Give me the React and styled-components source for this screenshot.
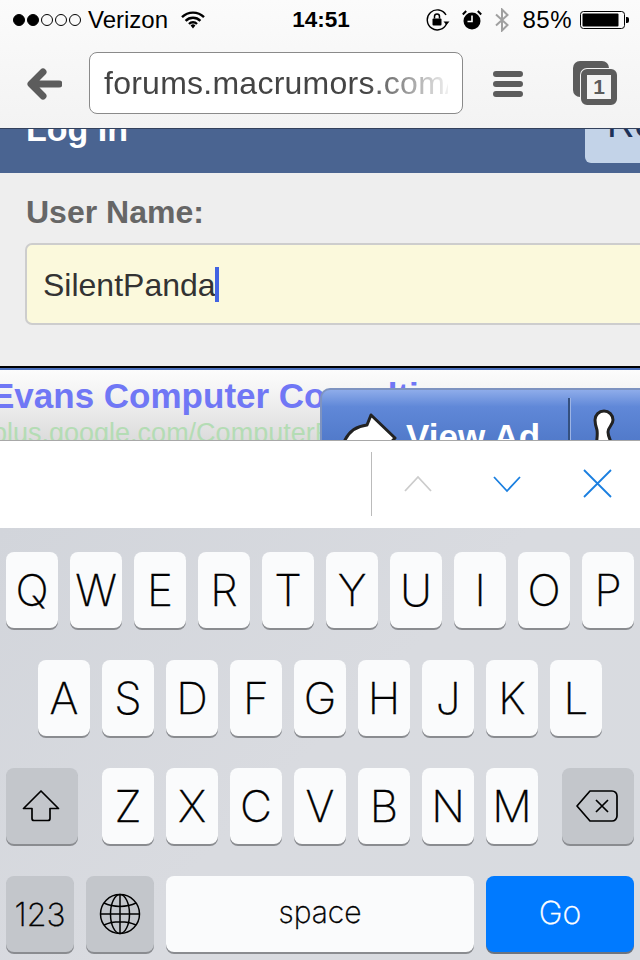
import React from 'react';
import styled, { createGlobalStyle } from 'styled-components';

const GlobalStyle = createGlobalStyle`
  html, body {
    margin: 0;
    padding: 0;
    background: #fff;
  }
`;

const Phone = styled.div`
  width: 640px;
  height: 960px;
  overflow: hidden;
  display: flex;
  flex-direction: column;
  font-family: "Liberation Sans", Arial, sans-serif;
`;

// Top chrome
const Chrome = styled.header`
  height: 128px;
  flex: none;
  background: linear-gradient(#fbfbfb, #f3f3f3);
  border-bottom: 1px solid #33415c;
  margin-bottom: -1px;
  position: relative;
  z-index: 1;
`;

const StatusBar = styled.div`
  height: 40px;
  display: grid;
  grid-template-columns: 1fr auto 1fr;
  align-items: center;
  padding: 0 11px 0 13px;
  color: #000;
  font-size: 24px;
`;

const StatusLeft = styled.div`
  display: flex;
  align-items: center;
`;

const StatusRight = styled.div`
  display: flex;
  align-items: center;
  justify-content: flex-end;
`;

const Dots = styled.div`
  display: flex;
  gap: 2px;
  margin-right: 7px;
`;

const Dot = styled.span`
  width: 12px;
  height: 12px;
  box-sizing: border-box;
  border-radius: 50%;
  border: 1px solid #000;
  background: ${(p) => (p.$on ? '#000' : 'transparent')};
`;

const Time = styled.div`
  font-weight: 700;
  font-size: 22.5px;
`;

const Percent = styled.span`
  margin: 0 8px 0 12px;
  letter-spacing: 0.5px;
`;

const NavBar = styled.div`
  height: 88px;
  display: flex;
  align-items: flex-start;
  padding-left: 26px;
`;

const BackIcon = styled.svg`
  width: 36px;
  height: 36px;
  margin: 26px 27px 0 0;
  flex: none;
`;

const UrlField = styled.div`
  width: 374px;
  height: 62px;
  margin-top: 12px;
  flex: none;
  box-sizing: border-box;
  background: #fff;
  border: 1px solid #8a8a8a;
  border-radius: 8px;
  padding: 0 14px;
  display: flex;
  align-items: center;
  overflow: hidden;
`;

const UrlText = styled.div`
  font-size: 32px;
  letter-spacing: 0.25px;
  color: #444;
  white-space: nowrap;
  width: 100%;
  overflow: hidden;
  -webkit-mask-image: linear-gradient(to right, #000 76%, rgba(0, 0, 0, 0.08) 100%);
  mask-image: linear-gradient(to right, #000 76%, rgba(0, 0, 0, 0.08) 100%);
`;

const MenuIcon = styled.svg`
  width: 30px;
  height: 26px;
  margin: 31px 0 0 30px;
  flex: none;
`;

const TabsIcon = styled.div`
  position: relative;
  width: 44px;
  height: 44px;
  margin: 21px 0 0 50px;
  flex: none;
`;

const TabsBack = styled.div`
  position: absolute;
  left: 0;
  top: 0;
  width: 36px;
  height: 36px;
  background: #5c5c5c;
  border-radius: 7px;
`;

const TabsFront = styled.div`
  position: absolute;
  left: 8px;
  top: 8px;
  width: 36px;
  height: 36px;
  box-sizing: border-box;
  background: #f4f4f4;
  border: 6px solid #5c5c5c;
  border-radius: 6px;
  box-shadow: 0 0 0 1px #f4f4f4;
  color: #5c5c5c;
  font-size: 21px;
  font-weight: 700;
  display: flex;
  align-items: center;
  justify-content: center;
`;

// Web page
const BlueHead = styled.section`
  height: 45px;
  flex: none;
  background: #4a6491;
  display: flex;
  justify-content: space-between;
  align-items: flex-start;
  overflow: hidden;
`;

const LogIn = styled.h1`
  margin: -19px 0 0 26px;
  font-size: 34px;
  line-height: 40px;
  font-weight: 700;
  color: #fff;
`;

const RegisterTab = styled.div`
  width: 55px;
  height: 35px;
  box-sizing: border-box;
  background: #c3d3e8;
  border-radius: 0 0 0 6px;
  color: #1c3158;
  font-size: 38px;
  line-height: 40px;
  white-space: nowrap;
  overflow: hidden;
`;

const RegisterLabel = styled.span`
  display: block;
  margin: -24px 0 0 22px;
`;

const FormArea = styled.section`
  height: 193px;
  flex: none;
  box-sizing: border-box;
  background: #eeeeee;
  padding: 21px 0 0 26px;
  overflow: hidden;
`;

const FieldLabel = styled.label`
  display: block;
  color: #666;
  font-size: 32px;
  line-height: 36px;
  font-weight: 700;
`;

const TextInput = styled.div`
  width: 640px;
  height: 82px;
  margin: 13px 0 0 -1px;
  box-sizing: border-box;
  background: #fbf9dc;
  border: 2px solid #cdcdcd;
  border-radius: 7px;
  padding: 3px 0 0 16px;
  display: flex;
  align-items: center;
  color: #333;
  font-size: 32px;
`;

const Caret = styled.span`
  width: 4px;
  height: 35px;
  margin: -3px 0 0 -1px;
  background: #4264e2;
`;

const AdBanner = styled.section`
  height: 74px;
  flex: none;
  position: relative;
  overflow: hidden;
  box-sizing: border-box;
  border-top: 2px solid #000;
  background: linear-gradient(#fdfdfd, #f5f5f5 30%, #dcdcdc);
  &::before {
    content: '';
    display: block;
    height: 2px;
    background: #4a6fbc;
  }
`;

const AdTitle = styled.div`
  margin: 6px 0 0 -9px;
  color: #7077f5;
  font-size: 35px;
  line-height: 40px;
  font-weight: 700;
  white-space: nowrap;
`;

const AdLink = styled.div`
  margin: 2px 0 0 -8px;
  color: #b4dcb4;
  font-size: 27px;
  line-height: 30px;
  white-space: nowrap;
`;

const ViewAd = styled.div`
  position: absolute;
  left: 320px;
  top: 20px;
  width: 330px;
  height: 60px;
  box-sizing: border-box;
  border: 2px solid #7e93c0;
  border-right: 0;
  border-radius: 10px 0 0 0;
  background: linear-gradient(#8eacea, #6088d8 30%, #4f78c8);
  display: flex;
  align-items: flex-start;
  color: #fff;
  font-size: 35px;
  font-weight: 700;
  overflow: hidden;
`;

const ViewAdIcon = styled.svg`
  width: 56px;
  height: 50px;
  margin: 20px 8px 0 20px;
  flex: none;
`;

const ViewAdLabel = styled.span`
  margin-top: 29px;
  width: 162px;
  flex: none;
  white-space: nowrap;
  line-height: 36px;
`;

const ViewAdRule = styled.span`
  width: 2px;
  height: 50px;
  margin-top: 8px;
  background: #34507f;
  border-right: 1px solid #9db4e4;
  flex: none;
`;

const ViewAdGlyph = styled.svg`
  width: 24px;
  height: 40px;
  margin: 19px 0 0 21px;
  flex: none;
`;

// Find bar
const FindBar = styled.section`
  height: 88px;
  flex: none;
  box-sizing: border-box;
  background: #fff;
  border-top: 1px solid #a8a8a8;
  display: flex;
  align-items: center;
`;

const FindRule = styled.span`
  width: 1px;
  height: 64px;
  margin: -1px 0 0 371px;
  background: #bbb;
`;

const FindIcon = styled.svg`
  width: 30px;
  height: 30px;
  flex: none;
  margin-left: ${(p) => p.$gap}px;
  margin-top: -2px;
`;

// Keyboard
const Keyboard = styled.section`
  flex: 1;
  box-sizing: border-box;
  padding: 24px 6px 0;
  background: linear-gradient(135deg, #d2d5db, #d9dbe0 50%, #d8dbe0);
  display: flex;
  flex-direction: column;
  gap: 32px;
`;

const KeyRow = styled.div`
  display: flex;
  justify-content: ${(p) => p.$justify || 'center'};
  gap: 12px;
`;

const KeyGroup = styled.div`
  display: flex;
  gap: 12px;
`;

const Key = styled.div`
  width: ${(p) => p.$w || 52}px;
  height: 76px;
  flex: none;
  box-sizing: border-box;
  padding-bottom: ${(p) => p.$lift || 0}px;
  border-radius: 8px;
  background: ${(p) => (p.$tone === 'dark' ? '#c3c6cb' : p.$tone === 'go' ? '#007aff' : '#fafbfc')};
  box-shadow: 0 2px 0 ${(p) => (p.$tone === 'go' ? '#6b7480' : '#8a8c90')};
  color: ${(p) => (p.$tone === 'go' ? '#fff' : '#000')};
  font-family: Inter, "Liberation Sans", sans-serif;
  font-weight: 200;
  -webkit-text-stroke: 0.35px currentColor;
  font-size: ${(p) => p.$size || 44}px;
  display: flex;
  align-items: center;
  justify-content: center;
`;

const KeyIcon = styled.svg`
  flex: none;
  margin-right: 2px;
`;

const rows = ['QWERTYUIOP', 'ASDFGHJKL', 'ZXCVBNM'];

const StatusIcon = styled.svg`
  flex: none;
  margin-left: ${(p) => p.$gap || 0}px;
`;

export default function App() {
  return (
    <Phone>
      <GlobalStyle />
      <Chrome>
        <StatusBar>
          <StatusLeft>
            <Dots>
              {[1, 1, 0, 0, 0].map((on, i) => (
                <Dot key={i} $on={!!on} />
              ))}
            </Dots>
            Verizon
            <StatusIcon $gap={13} width="24" height="18" viewBox="0 0 24 18">
              <path d="M1 6.2a15.5 15.5 0 0 1 22 0M4.6 9.8a10.4 10.4 0 0 1 14.8 0M8 13a5.6 5.6 0 0 1 8 0" fill="none" stroke="#000" strokeWidth="2.4" />
              <path d="M9.6 14.4a3.5 3.5 0 0 1 4.8 0L12 17.4z" fill="#000" />
            </StatusIcon>
          </StatusLeft>
          <Time>14:51</Time>
          <StatusRight>
            <StatusIcon width="24" height="22" viewBox="0 0 24 22">
              <path d="M20.6 14.5A10 10 0 1 1 20 6" fill="none" stroke="#000" strokeWidth="1.4" />
              <path d="M17.5 12.5h6l-3 3.5z" fill="#000" />
              <rect x="6.5" y="9.5" width="9" height="7" rx="1" fill="#000" />
              <path d="M8.5 9.5V7.5a2.5 2.5 0 0 1 5 0v2" fill="none" stroke="#000" strokeWidth="1.5" />
            </StatusIcon>
            <StatusIcon $gap={12} width="20" height="20" viewBox="0 0 20 20">
              <circle cx="10" cy="11" r="8.5" fill="#000" />
              <path d="M10 5.5V11.5H5.5" fill="none" stroke="#fff" strokeWidth="1.6" />
              <path d="M.8 4.500 4.200 1M19.200 4.500 15.800 1" stroke="#000" strokeWidth="2" />
            </StatusIcon>
            <StatusIcon $gap={12} width="16" height="24" viewBox="0 0 16 24">
              <path d="M2 6.500 13.500 17 8 22.500V1.500L13.500 7 2 17.500" fill="none" stroke="#a0a0a0" strokeWidth="2" />
            </StatusIcon>
            <Percent>85%</Percent>
            <StatusIcon width="49" height="20" viewBox="0 0 49 20">
              <rect x="0.5" y="1.500" width="44" height="17" rx="3" fill="none" stroke="#000" />
              <rect x="2.500" y="3.500" width="36" height="13" rx="1" fill="#000" />
              <path d="M46 7h1a2 2 0 0 1 2 2v2a2 2 0 0 1-2 2h-1z" fill="#000" />
            </StatusIcon>
          </StatusRight>
        </StatusBar>
        <NavBar>
          <BackIcon viewBox="0 0 36 36">
            <path d="M33 18H6M17 6 5 18l12 12" fill="none" stroke="#5c5c5c" strokeWidth="7" strokeLinecap="round" strokeLinejoin="round" />
          </BackIcon>
          <UrlField>
            <UrlText>forums.macrumors.com/</UrlText>
          </UrlField>
          <MenuIcon viewBox="0 0 30 26">
            <path d="M3 3h24M3 13h24M3 23h24" stroke="#5c5c5c" strokeWidth="6" strokeLinecap="round" />
          </MenuIcon>
          <TabsIcon>
            <TabsBack />
            <TabsFront>1</TabsFront>
          </TabsIcon>
        </NavBar>
      </Chrome>

      <BlueHead>
        <LogIn>Log In</LogIn>
        <RegisterTab>
          <RegisterLabel>Register</RegisterLabel>
        </RegisterTab>
      </BlueHead>

      <FormArea>
        <FieldLabel>User Name:</FieldLabel>
        <TextInput>
          SilentPanda
          <Caret />
        </TextInput>
      </FormArea>

      <AdBanner>
        <AdTitle>Evans Computer Consulting</AdTitle>
        <AdLink>plus.google.com/ComputerRepair</AdLink>
        <ViewAd>
          <ViewAdIcon viewBox="0 0 56 50">
            <path d="M3 30c5-10 13-14 22-15l4-10 24 23-20 22H3z" fill="#fff" stroke="#222" strokeWidth="3" strokeLinejoin="round" />
          </ViewAdIcon>
          <ViewAdLabel>View Ad</ViewAdLabel>
          <ViewAdRule />
          <ViewAdGlyph viewBox="0 0 24 40">
            <path d="M12 2a9 9 0 0 1 9 9c0 5-5 7-5 12 0 5 3 9 5 15H5c-1-7 1-11 0-17-1-3-2-6-2-10a9 9 0 0 1 9-9z" fill="#fff" stroke="#222" strokeWidth="3" />
          </ViewAdGlyph>
        </ViewAd>
      </AdBanner>

      <FindBar>
        <FindRule />
        <FindIcon $gap={31} viewBox="0 0 30 30">
          <path d="M2 22 15 8l13 14" fill="none" stroke="#ccc" strokeWidth="1.8" />
        </FindIcon>
        <FindIcon $gap={59} viewBox="0 0 30 30">
          <path d="M2 8l13 14L28 8" fill="none" stroke="#1a7fe0" strokeWidth="1.8" />
        </FindIcon>
        <FindIcon $gap={60} viewBox="0 0 30 30">
          <path d="M2 1l27 27M29 1 2 28" fill="none" stroke="#1a7fe0" strokeWidth="1.8" />
        </FindIcon>
      </FindBar>

      <Keyboard>
        <KeyRow>
          {rows[0].split('').map((c) => (
            <Key key={c}>{c}</Key>
          ))}
        </KeyRow>
        <KeyRow>
          {rows[1].split('').map((c) => (
            <Key key={c}>{c}</Key>
          ))}
        </KeyRow>
        <KeyRow $justify="space-between">
          <Key $w={72} $tone="dark">
            <KeyIcon width="38" height="32" viewBox="0 0 38 32">
              <path d="M19 1 1.500 18.500H10v10a2 2 0 0 0 2 2h14a2 2 0 0 0 2-2v-10h8.500z" fill="none" stroke="#000" strokeWidth="1.7" strokeLinejoin="round" />
            </KeyIcon>
          </Key>
          <KeyGroup>
            {rows[2].split('').map((c) => (
              <Key key={c}>{c}</Key>
            ))}
          </KeyGroup>
          <Key $w={72} $tone="dark">
            <KeyIcon width="42" height="32" viewBox="0 0 42 32">
              <path d="M14 1h22a5 5 0 0 1 5 5v20a5 5 0 0 1-5 5H14L1 16z" fill="none" stroke="#000" strokeWidth="1.7" strokeLinejoin="round" />
              <path d="M20 10l12 12M32 10 20 22" stroke="#000" strokeWidth="1.7" />
            </KeyIcon>
          </Key>
        </KeyRow>
        <KeyRow>
          <Key $w={68} $tone="dark" $size={32}>123</Key>
          <Key $w={68} $tone="dark">
            <svg width="42" height="42" viewBox="0 0 42 42" fill="none" stroke="#000" strokeWidth="1.500">
              <circle cx="21" cy="21" r="19.500" />
              <ellipse cx="21" cy="21" rx="9.500" ry="19.500" />
              <path d="M21 1.500v39M1.500 21h39M5 10c9 4.500 23 4.500 32 0M5 32c9-4.500 23-4.500 32 0" />
            </svg>
          </Key>
          <Key $w={308} $size={30} $lift={4}>space</Key>
          <Key $w={148} $tone="go" $size={32} $lift={4}>Go</Key>
        </KeyRow>
      </Keyboard>
    </Phone>
  );
}
